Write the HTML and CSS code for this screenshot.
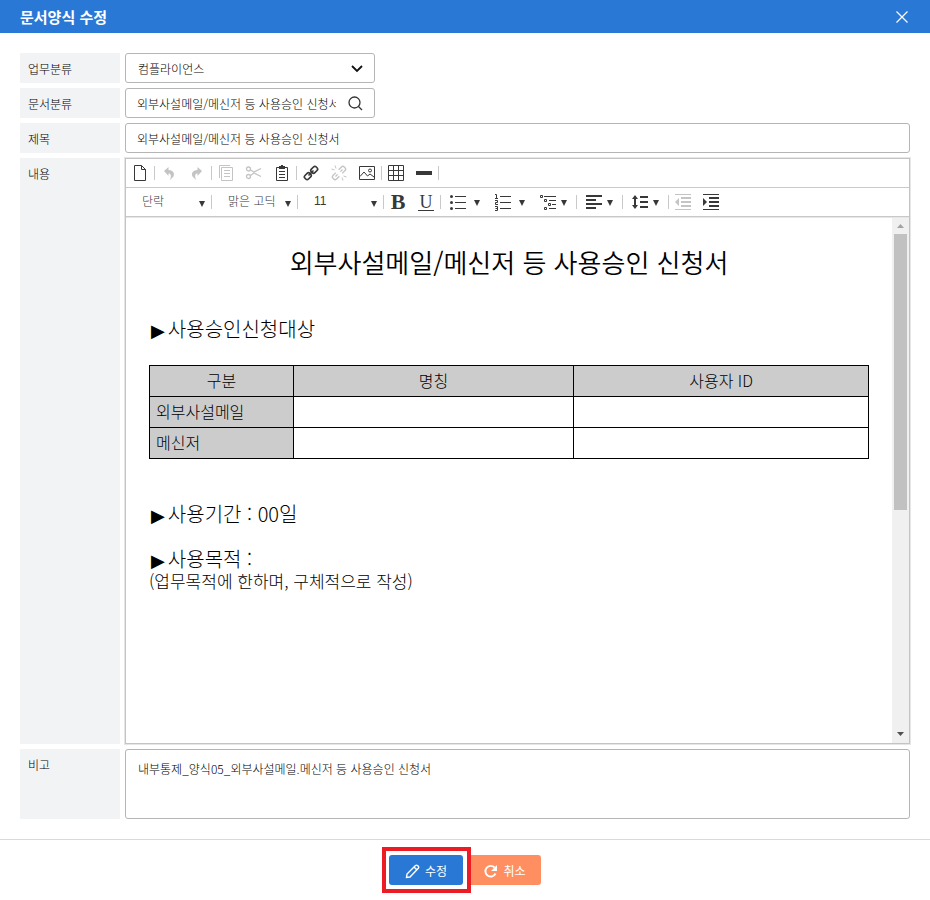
FILE: index.html
```html
<!DOCTYPE html>
<html lang="ko">
<head>
<meta charset="utf-8">
<meta name="viewport" content="width=device-width, initial-scale=1">
<title>문서양식 수정</title>
<link rel="stylesheet" href="styles.css">
</head>
<body>
<header class="titlebar">
  <h1>문서양식 수정</h1>
  <button type="button" class="close" aria-label="닫기"><svg width="12" height="12" viewBox="0 0 12 12"><path d="M.5.5l11 11M11.500.5l-11 11" stroke="#fff" stroke-width="1.200" fill="none"/></svg></button>
</header>
<form class="page">
  <div class="fields">
    <label class="name" for="task">업무분류</label>
    <div class="box short">
      <select id="task" class="control"><option>컴플라이언스</option></select>
      <svg class="chevron" width="12" height="8" viewBox="0 0 12 8"><path d="M1 1l5 5 5-5" fill="none" stroke="#111" stroke-width="1.800"/></svg>
    </div>
    <label class="name" for="kind">문서분류</label>
    <div class="box short">
      <input id="kind" class="control clipped" type="text" value="외부사설메일/메신저 등 사용승인 신청서">
      <button type="button" class="search" aria-label="검색"><svg width="15" height="15" viewBox="0 0 15 15" fill="none" stroke="#333" stroke-width="1.300"><circle cx="6.500" cy="6.500" r="5.500"/><path d="M10.500 10.500l3.500 3.500"/></svg></button>
    </div>
    <label class="name" for="subject">제목</label>
    <div class="box"><input id="subject" class="control" type="text" value="외부사설메일/메신저 등 사용승인 신청서"></div>
    <div class="name" id="bodylabel">내용</div>
    <div class="editor">
      <div class="tools">
        <button type="button" aria-label="새 문서"><svg width="18" height="18" viewBox="0 0 18 18"><path d="M3.500 1.500h7l4 4v11h-11zM10.500 1.500v4h4" class="line"/></svg></button>
        <i class="sep"></i>
        <button type="button" disabled aria-label="실행 취소"><svg width="18" height="18" viewBox="0 0 18 18"><path d="M4 7l4.500-4v3c4.500 0 6.500 3 5 6.500L10 16c1.500-4 1-6.500-1.500-6.500v2.500z" fill="currentColor"/></svg></button>
        <button type="button" disabled aria-label="다시 실행"><svg width="18" height="18" viewBox="0 0 18 18"><path d="M14 7L9.500 3v3c-4.500 0-6.500 3-5 6.500L8 16c-1.500-4-1-6.500 1.500-6.500v2.500z" fill="currentColor"/></svg></button>
        <i class="sep"></i>
        <button type="button" disabled aria-label="복사"><svg width="18" height="18" viewBox="0 0 18 18"><path d="M4.500 3.500h11v13h-11zM2.500 14V1.500H13M7 6.500h6M7 9.500h6M7 12.500h6" class="line"/></svg></button>
        <button type="button" disabled aria-label="잘라내기"><svg width="18" height="18" viewBox="0 0 18 18"><g fill="none" stroke="currentColor" stroke-width="1.300"><circle cx="3.500" cy="5" r="2"/><circle cx="3.500" cy="12.500" r="2"/><path d="M5.500 6l3.500 2 7-3.500M5.500 11.500L9 9l7 3.500"/></g></svg></button>
        <button type="button" aria-label="붙여넣기"><svg width="18" height="18" viewBox="0 0 18 18"><path d="M3.500 3.500h11v13h-11zM6 7.500h6M6 10.500h6M6 13.500h6" class="line"/><path d="M6 5V2h2V1h2v1h2v3z" fill="currentColor"/></svg></button>
        <i class="sep"></i>
        <button type="button" aria-label="링크"><svg width="18" height="18" viewBox="0 0 18 18"><g transform="rotate(-45 9 9)" fill="none" stroke="currentColor" stroke-width="1.600"><rect x="1" y="6.500" width="7" height="5" rx="2"/><rect x="10" y="6.500" width="7" height="5" rx="2"/><path d="M5.500 9h7"/></g></svg></button>
        <button type="button" disabled aria-label="링크 제거"><svg width="18" height="18" viewBox="0 0 18 18"><g transform="rotate(-45 9 9)" fill="none" stroke="currentColor" stroke-width="1.300"><path d="M7 6.500H3a2 2 0 0 0-2 2v1a2 2 0 0 0 2 2h4M11 6.500h4a2 2 0 0 1 2 2v1a2 2 0 0 1-2 2h-4M4 9h3M11 9h3"/></g><path d="M5 1.500l1 3M1.500 5l3 1M13 16.500l-1-3M16.500 13l-3-1" class="line"/></svg></button>
        <button type="button" aria-label="이미지"><svg width="18" height="18" viewBox="0 0 18 18"><path d="M1.500 2.500h15v13h-15zM2 12.500l4-4.500 3.500 4 2.500-2 4 3" class="line"/><circle cx="12" cy="6.500" r="1.500" class="line"/></svg></button>
        <i class="sep"></i>
        <button type="button" aria-label="표"><svg width="18" height="18" viewBox="0 0 18 18"><path d="M1.500 1.500h15v15h-15zM6.500 1.500v15M11.500 1.500v15M1.500 6.500h15M1.500 11.500h15" class="line"/></svg></button>
        <button type="button" aria-label="구분선"><svg width="18" height="18" viewBox="0 0 18 18"><path d="M1 7h16v4H1z" fill="currentColor"/></svg></button>
        <i class="sep"></i>
      </div>
      <div class="tools">
        <div class="combo"><select aria-label="문단 형식"><option>단락</option></select><svg class="down" width="6" height="7" viewBox="0 0 6 7"><path d="M0 1h6L3 7z"/></svg></div>
        <i class="sep"></i>
        <div class="combo"><select aria-label="글꼴"><option>맑은 고딕</option></select><svg class="down" width="6" height="7" viewBox="0 0 6 7"><path d="M0 1h6L3 7z"/></svg></div>
        <i class="sep"></i>
        <div class="combo size"><select aria-label="글자 크기"><option>11</option></select><svg class="down" width="6" height="7" viewBox="0 0 6 7"><path d="M0 1h6L3 7z"/></svg></div>
        <i class="sep"></i>
        <button type="button" class="bold" aria-label="굵게">B</button>
        <button type="button" class="under" aria-label="밑줄"><span>U</span></button>
        <i class="sep"></i>
        <button type="button" class="wide" aria-label="글머리 기호"><svg width="18" height="18" viewBox="0 0 18 18"><path d="M6 3.500h11M6 9.500h11M6 15.500h11" class="line"/><circle cx="2.500" cy="3.500" r="1.500" fill="currentColor"/><circle cx="2.500" cy="9.500" r="1.500" fill="currentColor"/><circle cx="2.500" cy="15.500" r="1.500" fill="currentColor"/></svg><svg class="tri" width="6" height="7" viewBox="0 0 6 7"><path d="M0 1h6L3 7z"/></svg></button>
        <button type="button" class="wide" aria-label="번호 목록"><svg width="18" height="18" viewBox="0 0 18 18"><path d="M6 3.500h11M6 9.500h11M6 15.500h11M1 1.500h1.500v4M1 5.500h3M1 7.500h2.500v2H1.500v2H4M1 13.500h2.500v4H1M1.500 15.500h2" class="line"/></svg><svg class="tri" width="6" height="7" viewBox="0 0 6 7"><path d="M0 1h6L3 7z"/></svg></button>
        <button type="button" class="wide near" aria-label="다단계 목록"><svg width="18" height="18" viewBox="0 0 18 18"><path d="M1.500 2.500h2v2h-2zM5.500 6.500h2v2h-2zM9.500 10.500h2v2h-2zM5.500 14.500h2v2h-2zM5 3.500h12M10 7.500h7M13 11.500h4M10 15.500h7" class="line"/></svg><svg class="tri" width="6" height="7" viewBox="0 0 6 7"><path d="M0 1h6L3 7z"/></svg></button>
        <i class="sep"></i>
        <button type="button" class="wide near" aria-label="정렬"><svg width="18" height="18" viewBox="0 0 18 18"><path d="M1 3h16M1 7h10M1 11h16M1 15h10" class="thick"/></svg><svg class="tri" width="6" height="7" viewBox="0 0 6 7"><path d="M0 1h6L3 7z"/></svg></button>
        <i class="sep"></i>
        <button type="button" class="wide near" aria-label="줄 간격"><svg width="18" height="18" viewBox="0 0 18 18"><path d="M4 4v10M9 4h8M9 9h8M9 14h8" class="thick"/><path d="M1 6l3-4 3 4zM1 12l3 4 3-4z" fill="currentColor"/></svg><svg class="tri" width="6" height="7" viewBox="0 0 6 7"><path d="M0 1h6L3 7z"/></svg></button>
        <i class="sep"></i>
        <button type="button" disabled aria-label="내어쓰기"><svg width="18" height="18" viewBox="0 0 18 18"><path d="M1 1.500h16M1 16.500h16" class="line"/><path d="M7 5h10M7 9h10M7 13h10" class="thick"/><path d="M5 5v8L1 9z" fill="currentColor"/></svg></button>
        <button type="button" aria-label="들여쓰기"><svg width="18" height="18" viewBox="0 0 18 18"><path d="M1 1.500h16M1 16.500h16" class="line"/><path d="M7 5h10M7 9h10M7 13h10" class="thick"/><path d="M1 5v8l4-4z" fill="currentColor"/></svg></button>
      </div>
      <div class="view">
        <div class="doc" contenteditable="true" role="textbox" aria-labelledby="bodylabel" spellcheck="false">
          <h2>외부사설메일/메신저 등 사용승인 신청서</h2>
          <h3><span class="mark">▶</span>사용승인신청대상</h3>
          <table>
            <colgroup><col class="c1"><col class="c2"><col class="c3"></colgroup>
            <tr><th>구분</th><th>명칭</th><th>사용자 ID</th></tr>
            <tr><td class="head">외부사설메일</td><td></td><td></td></tr>
            <tr><td class="head">메신저</td><td></td><td></td></tr>
          </table>
          <h3 class="period"><span class="mark">▶</span>사용기간 : 00일</h3>
          <h3 class="purpose"><span class="mark">▶</span>사용목적 :</h3>
          <p>(업무목적에 한하며, 구체적으로 작성)</p>
        </div>
        <div class="scroll" aria-hidden="true">
          <svg class="up" width="17" height="16" viewBox="0 0 17 16"><path d="M5 10h7L8.500 6z"/></svg>
          <div class="track"><div class="thumb"></div></div>
          <svg width="17" height="17" viewBox="0 0 17 17"><path d="M5 6h7l-3.500 4z"/></svg>
        </div>
      </div>
    </div>
    <label class="name" for="note">비고</label>
    <div class="box"><textarea id="note" class="control">내부통제_양식05_외부사설메일.메신저 등 사용승인 신청서</textarea></div>
  </div>
  <footer class="actions">
    <div class="focus"><button type="submit" class="btn save"><svg width="15" height="15" viewBox="0 0 15 15" fill="none" stroke="#fff" stroke-width="1.400"><path d="M1.500 13.500l.5-3.500L10.500 1.500q1-.8 2 0l.8.8q.8 1 0 2L5 13zM9 3l3 3"/></svg>수정</button></div>
    <button type="button" class="btn cancel"><svg width="15" height="15" viewBox="0 0 15 15"><path d="M11.500 3.500a5.300 5.300 0 1 0 1 6" fill="none" stroke="#fff" stroke-width="1.900"/><path d="M14 1v6H8z" fill="#fff"/></svg>취소</button>
  </footer>
</form>
</body>
</html>
```
FILE: styles.css
```css
* { box-sizing: border-box; }

body {
  margin: 0;
  min-height: 100vh;
  display: flex;
  flex-direction: column;
  background: #fff;
  color: #000;
  font: 12px/18px "Noto Sans CJK KR", sans-serif;
}

button, input, select, textarea { font: inherit; color: inherit; }
button { padding: 0; border: 0; background: none; }
svg { display: block; flex: none; }

.titlebar {
  height: 33px;
  padding: 0 20px;
  display: flex;
  align-items: center;
  justify-content: space-between;
  background: #2a78d5;
  color: #fff;
}
.titlebar h1 { margin: 0; font-size: 15px; line-height: 24px; font-weight: 700; }
.close { width: 16px; height: 30px; display: flex; align-items: center; justify-content: center; }

.page { flex: 1; display: flex; flex-direction: column; }
.fields {
  flex: 1;
  padding: 20px;
  display: grid;
  grid-template-columns: 100px minmax(0, 1fr);
  grid-template-rows: 30px 30px 30px 1fr 70px;
  gap: 5px;
}
.name { padding: 7px 8px; background: #f1f3f5; font-weight: 300; }

.box {
  display: flex;
  position: relative;
  border: 1px solid #b5b5b5;
  border-radius: 3px;
  background: #fff;
}
.short { width: 250px; }
.control {
  flex: 1;
  min-width: 0;
  margin: 0;
  padding: 2px 11px 0;
  border: 0;
  outline: 0;
  background: transparent;
  appearance: none;
  resize: none;
  font-weight: 300;
}
.clipped { padding-right: 0; }
select.control { padding-left: 12px; }
textarea.control { padding: 10px 12px; }
.chevron { position: absolute; right: 11px; top: 11px; pointer-events: none; }
.search { width: 38px; display: flex; align-items: center; justify-content: center; }

.editor {
  display: flex;
  flex-direction: column;
  border: 1px solid #c4c4c4;
  box-shadow: 0 0 0 1px #e6e6e6;
}
.tools { height: 29px; display: flex; align-items: center; border-bottom: 1px solid #c9c9c9; color: #383838; }
.tools button { width: 28px; height: 28px; display: flex; align-items: center; justify-content: center; }
.tools button:disabled { color: #c4c4c4; }
.tools .wide { width: 45px; justify-content: flex-start; padding-left: 8px; gap: 7px; }
.tools .near { gap: 4px; }
.sep { width: 1px; height: 14px; background: #c9c9c9; }
.line { fill: none; stroke: currentColor; stroke-width: 1; }
.thick { fill: none; stroke: currentColor; stroke-width: 2; }
.tri, .down { fill: #383838; }
.combo { width: 85px; position: relative; }
.combo select {
  width: 100%;
  height: 24px;
  padding: 0 0 2px 16px;
  border: 0;
  background: transparent;
  appearance: none;
  font-weight: 300;
}
.size select { font-family: "Liberation Sans", sans-serif; }
.down { position: absolute; right: 6px; top: 10px; pointer-events: none; }
.tools .bold { font: 700 22px/24px "Liberation Serif", serif; }
.tools .under { font: 18px/16px "Liberation Serif", serif; }
.under span { width: 16px; border-bottom: 1px solid #383838; }

.view { flex: 1; display: flex; border-top: 1px solid #e6e6e6; }
.doc {
  flex: 1;
  min-width: 0;
  padding: 26px 23px;
  outline: 0;
  color: #000;
  font-size: 16px;
  line-height: 24px;
  font-weight: 300;
}
.doc h2 { margin: 0 0 38px; font-size: 26px; line-height: 36px; font-weight: 350; text-align: center; }
.doc h3 { margin: 0 0 24px; font-size: 20px; line-height: 22px; font-weight: 300; }
.doc .period { margin: 44px 0 22px; }
.doc .purpose { margin: 0; }
.mark { padding: 0 3px 0 2px; font: 18px/20px "DejaVu Sans", sans-serif; }
.doc p { margin: 0; font-size: 17px; line-height: 20px; }
.doc table { width: 100%; border-collapse: collapse; table-layout: fixed; }
.c1 { width: 20%; }
.c2 { width: 39%; }
.c3 { width: 41%; }
.doc tr { height: 31px; }
.doc th, .doc td { padding: 0 6px 2px; border: 1px solid #000; font-weight: 300; }
.doc th, .head { background: #ccc; }

.scroll { width: 17px; display: flex; flex-direction: column; background: #f0f0f0; fill: #505050; }
.up { fill: #a3a3a3; }
.track { flex: 1; padding: 0 2px; }
.thumb { height: 56%; background: #c1c1c1; }

.actions {
  height: 61px;
  padding-top: 15px;
  display: flex;
  align-items: flex-start;
  justify-content: center;
  gap: 5px;
  border-top: 1px solid #d9d9d9;
}
.focus { position: relative; }
.focus::after {
  content: "";
  position: absolute;
  inset: -8px -8px -8px -7px;
  border: 4px solid #ed1c24;
  pointer-events: none;
}
.btn {
  width: 74px;
  height: 30px;
  padding-top: 2px;
  display: flex;
  align-items: center;
  justify-content: center;
  gap: 5px;
  border-radius: 3px;
  color: #fff;
  font-weight: 400;
}
.save { background: #2a78d5; }
.cancel { width: 73px; background: #ff8f60; }
```
